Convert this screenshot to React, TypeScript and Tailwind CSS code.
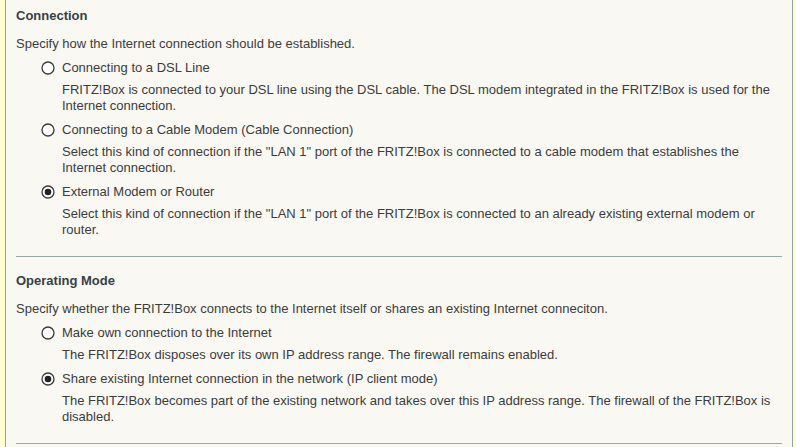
import React from 'react';

type Option = {
  label: string;
  description: string;
  checked?: boolean;
};

const connectionOptions: Option[] = [
  {
    label: 'Connecting to a DSL Line',
    description:
      'FRITZ!Box is connected to your DSL line using the DSL cable. The DSL modem integrated in the FRITZ!Box is used for the Internet connection.',
  },
  {
    label: 'Connecting to a Cable Modem (Cable Connection)',
    description:
      'Select this kind of connection if the "LAN 1" port of the FRITZ!Box is connected to a cable modem that establishes the Internet connection.',
  },
  {
    label: 'External Modem or Router',
    description:
      'Select this kind of connection if the "LAN 1" port of the FRITZ!Box is connected to an already existing external modem or router.',
    checked: true,
  },
];

const modeOptions: Option[] = [
  {
    label: 'Make own connection to the Internet',
    description: 'The FRITZ!Box disposes over its own IP address range. The firewall remains enabled.',
  },
  {
    label: 'Share existing Internet connection in the network (IP client mode)',
    description:
      'The FRITZ!Box becomes part of the existing network and takes over this IP address range. The firewall of the FRITZ!Box is disabled.',
    checked: true,
  },
];

const Radio = ({ checked }: { checked?: boolean }) => (
  <svg width="14" height="14" viewBox="0 0 14 14" className="shrink-0">
    <circle cx="7" cy="7" r="6" fill="#ffffff" stroke="#3a3a3a" strokeWidth="1.3" />
    {checked && <circle cx="7" cy="7" r="3.3" fill="#222222" />}
  </svg>
);

const Section = ({ title, intro, options }: { title: string; intro: string; options: Option[] }) => (
  <div className="pb-[18px] border-b border-[#98a9a6]">
    <h2 className="font-bold text-[13px] leading-[16px] text-[#3a3f44]">{title}</h2>
    <p className="mt-[12px] mb-[1px]">{intro}</p>
    <div className="pl-[25px]">
      {options.map((opt) => (
        <div key={opt.label} className="mt-[6px]">
          <label className="flex items-center h-[20px] gap-[7px]">
            <Radio checked={opt.checked} />
            <span>{opt.label}</span>
          </label>
          <p className="mt-[4px] pl-[21px] pr-[6px]">{opt.description}</p>
        </div>
      ))}
    </div>
  </div>
);

export default function App() {
  return (
    <div
      className="flex w-[796px] h-[447px] overflow-hidden bg-[#ffffd2] text-[13px] leading-[16px] text-[#3c3c3c]"
      style={{ fontFamily: '"Liberation Sans", Arial, sans-serif' }}
    >
      <div className="w-[5px] shrink-0" />
      <div className="w-[788px] shrink-0 border-x border-[#8fa39c] bg-[#f9f8f3] px-[10px] pt-[8px]">
        <Section
          title="Connection"
          intro="Specify how the Internet connection should be established."
          options={connectionOptions}
        />
        <div className="pt-[16px]">
          <Section
            title="Operating Mode"
            intro="Specify whether the FRITZ!Box connects to the Internet itself or shares an existing Internet conneciton."
            options={modeOptions}
          />
        </div>
      </div>
    </div>
  );
}
